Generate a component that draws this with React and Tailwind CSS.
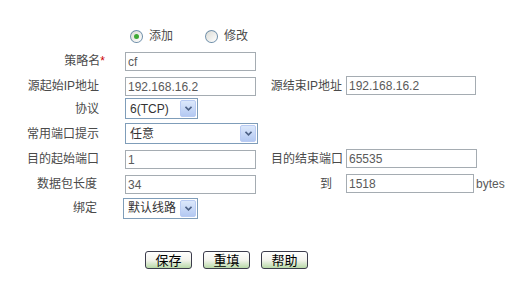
import React, { useState } from "react";

const font = { fontFamily: '"Liberation Sans", Arial, "Noto Sans CJK SC", sans-serif' };

const Label = ({ children, className = "" }) => (
  <div className={`w-[99px] shrink-0 text-right text-[12px] text-[#4a4a4a] ${className}`}>{children}</div>
);

const RightLabel = ({ children, className = "" }) => (
  <div className={`w-[90px] shrink-0 text-right text-[12px] text-[#4a4a4a] ${className}`}>{children}</div>
);

const TextInput = ({ value, w = "w-[131px]" }) => (
  <input
    readOnly
    value={value}
    className={`${w} h-[19px] border border-[#a5acb2] bg-white px-[2px] text-[12px] text-[#5a5a5a] outline-none`}
    style={font}
  />
);

const Chevron = () => (
  <svg width="7" height="5" viewBox="0 0 7 5">
    <path d="M0.5 0.8 L3.5 3.8 L6.5 0.8" fill="none" stroke="#4d6185" strokeWidth="1.6" />
  </svg>
);

const Select = ({ value, w }) => (
  <div className={`${w} h-[21px] flex items-center border border-[#7f9db9] bg-white p-[1px]`}>
    <span className="flex-1 pl-[3px] text-[12px] text-[#333]">{value}</span>
    <span className="w-[16px] h-[17px] flex items-center justify-center rounded-[2px] border border-[#b9cbf3] bg-gradient-to-b from-[#dce8fb] to-[#b4c9f2]">
      <Chevron />
    </span>
  </div>
);

const Radio = ({ checked, label, onClick }) => (
  <button onClick={onClick} className="flex items-center gap-[6px] text-[12px] text-[#4a4a4a]">
    <span className="w-[13px] h-[13px] rounded-full border border-[#1c5180]/60 bg-gradient-to-br from-[#dcdcd6] to-white flex items-center justify-center">
      {checked && <span className="w-[5px] h-[5px] rounded-full bg-[#3ea935]" />}
    </span>
    {label}
  </button>
);

const XpButton = ({ children }) => (
  <button className="w-[47px] h-[18px] rounded-[3px] border border-[#3c3c4c] bg-gradient-to-b from-white via-[#f4f4ee] to-[#b8d9a8] text-[13px] leading-none text-black">
    {children}
  </button>
);

export default function App() {
  const [mode, setMode] = useState("add");

  return (
    <div className="w-[515px] h-[308px] bg-white pt-[28px]" style={font}>
      <div className="flex items-center h-[16px] pl-[130px] gap-[32px]">
        <Radio checked={mode === "add"} label="添加" onClick={() => setMode("add")} />
        <Radio checked={mode === "edit"} label="修改" onClick={() => setMode("edit")} />
      </div>

      <div className="flex items-center mt-[7px] h-[19px]">
        <Label>
          策略名<span className="text-[#c00] mr-[-6px]">*</span>
        </Label>
        <div className="ml-[26px]">
          <TextInput value="cf" />
        </div>
      </div>

      <div className="flex items-center mt-[6px] h-[19px]">
        <Label>源起始IP地址</Label>
        <div className="ml-[26px]">
          <TextInput value="192.168.16.2" />
        </div>
        <RightLabel className="pr-[4px]">源结束IP地址</RightLabel>
        <TextInput value="192.168.16.2" w="w-[130px]" />
      </div>

      <div className="flex items-center mt-[3px] h-[21px]">
        <Label>协议</Label>
        <div className="ml-[26px]">
          <Select value="6(TCP)" w="w-[73px]" />
        </div>
      </div>

      <div className="flex items-center mt-[4px] h-[21px]">
        <Label>常用端口提示</Label>
        <div className="ml-[26px]">
          <Select value="任意" w="w-[133px]" />
        </div>
      </div>

      <div className="flex items-center mt-[5px] h-[19px]">
        <Label>目的起始端口</Label>
        <div className="ml-[26px]">
          <TextInput value="1" />
        </div>
        <RightLabel className="pr-[3px]">目的结束端口</RightLabel>
        <TextInput value="65535" w="w-[131px]" />
      </div>

      <div className="flex items-center mt-[6px] h-[19px]">
        <Label className="pr-[2px]">数据包长度</Label>
        <div className="ml-[26px]">
          <TextInput value="34" />
        </div>
        <RightLabel className="pr-[14px]">到</RightLabel>
        <TextInput value="1518" w="w-[128px]" />
        <span className="ml-[2px] text-[12px] text-[#5a5a5a]">bytes</span>
      </div>

      <div className="flex items-center mt-[4px] h-[22px]">
        <Label className="pr-[2px]">绑定</Label>
        <div className="ml-[24px]">
          <Select value="默认线路" w="w-[75px]" />
        </div>
      </div>

      <div className="flex items-center gap-[11px] pl-[145px] mt-[32px]">
        <XpButton>保存</XpButton>
        <XpButton>重填</XpButton>
        <XpButton>帮助</XpButton>
      </div>
    </div>
  );
}
